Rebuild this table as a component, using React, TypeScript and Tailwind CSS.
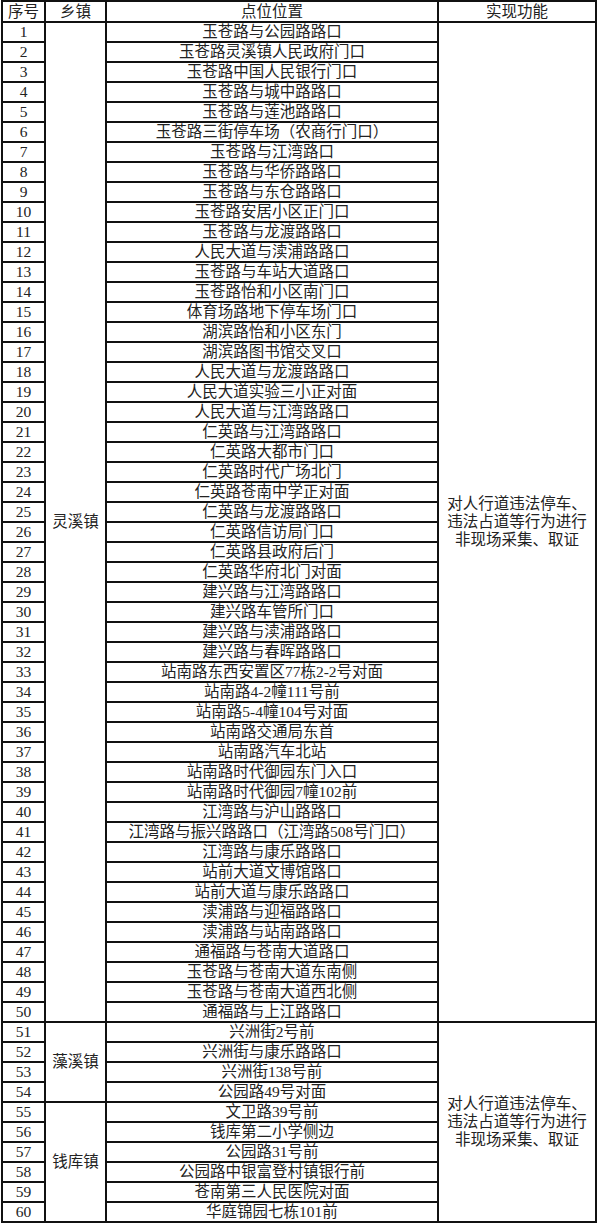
const rows: string[] = [
  '玉苍路与公园路路口',
  '玉苍路灵溪镇人民政府门口',
  '玉苍路中国人民银行门口',
  '玉苍路与城中路路口',
  '玉苍路与莲池路路口',
  '玉苍路三街停车场（农商行门口）',
  '玉苍路与江湾路口',
  '玉苍路与华侨路路口',
  '玉苍路与东仓路路口',
  '玉苍路安居小区正门口',
  '玉苍路与龙渡路路口',
  '人民大道与渎浦路路口',
  '玉苍路与车站大道路口',
  '玉苍路怡和小区南门口',
  '体育场路地下停车场门口',
  '湖滨路怡和小区东门',
  '湖滨路图书馆交叉口',
  '人民大道与龙渡路路口',
  '人民大道实验三小正对面',
  '人民大道与江湾路路口',
  '仁英路与江湾路路口',
  '仁英路大都市门口',
  '仁英路时代广场北门',
  '仁英路苍南中学正对面',
  '仁英路与龙渡路路口',
  '仁英路信访局门口',
  '仁英路县政府后门',
  '仁英路华府北门对面',
  '建兴路与江湾路路口',
  '建兴路车管所门口',
  '建兴路与渎浦路路口',
  '建兴路与春晖路路口',
  '站南路东西安置区77栋2-2号对面',
  '站南路4-2幢111号前',
  '站南路5-4幢104号对面',
  '站南路交通局东首',
  '站南路汽车北站',
  '站南路时代御园东门入口',
  '站南路时代御园7幢102前',
  '江湾路与沪山路路口',
  '江湾路与振兴路路口（江湾路508号门口）',
  '江湾路与康乐路路口',
  '站前大道文博馆路口',
  '站前大道与康乐路路口',
  '渎浦路与迎福路路口',
  '渎浦路与站南路路口',
  '通福路与苍南大道路口',
  '玉苍路与苍南大道东南侧',
  '玉苍路与苍南大道西北侧',
  '通福路与上江路路口',
  '兴洲街2号前',
  '兴洲街与康乐路路口',
  '兴洲街138号前',
  '公园路49号对面',
  '文卫路39号前',
  '钱库第二小学侧边',
  '公园路31号前',
  '公园路中银富登村镇银行前',
  '苍南第三人民医院对面',
  '华庭锦园七栋101前',
];

const cell = 'bg-white flex items-center justify-center whitespace-nowrap leading-[18px]';

function Func() {
  return (
    <div className="text-center leading-[18px]">
      对人行道违法停车、
      <br />
      违法占道等行为进行
      <br />
      非现场采集、取证
    </div>
  );
}

export default function App() {
  return (
    <div className="w-[598px] h-[1224px] bg-white pl-[1px]">
      <div
        className="grid w-fit grid-cols-[41px_59px_330px_156px] grid-rows-[19px_repeat(60,18px)] gap-[2px] bg-[#111] p-[2px] text-[15.5px] text-[#222]"
        style={{ fontFamily: '"Liberation Serif", "Noto Sans CJK SC", serif' }}
      >
        <div className={cell}>序号</div>
        <div className={cell}>乡镇</div>
        <div className={cell}>点位位置</div>
        <div className={cell}>实现功能</div>

        {rows.map((loc, i) => {
          const n = i + 1;
          return [
            <div key={`n${n}`} className={cell}>{n}</div>,
            n === 1 && <div key="t1" className={`${cell} row-span-50`}>灵溪镇</div>,
            n === 51 && <div key="t2" className={`${cell} row-span-4`}>藻溪镇</div>,
            n === 55 && <div key="t3" className={`${cell} row-span-6`}>钱库镇</div>,
            <div key={`l${n}`} className={cell}>{loc}</div>,
            n === 1 && (
              <div key="f1" className={`${cell} row-span-50`}>
                <Func />
              </div>
            ),
            n === 51 && (
              <div key="f2" className={`${cell} row-span-10`}>
                <Func />
              </div>
            ),
          ];
        })}
      </div>
    </div>
  );
}
